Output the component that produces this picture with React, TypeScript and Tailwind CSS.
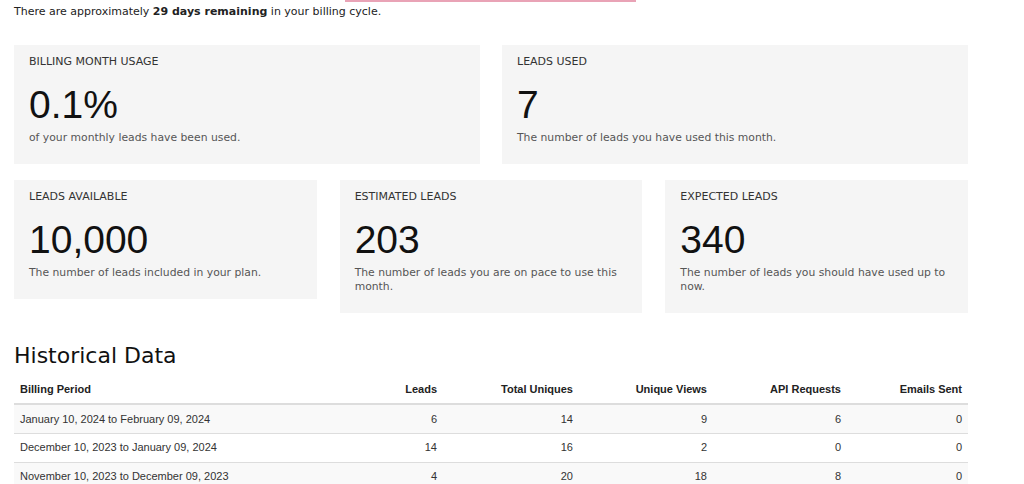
import React from 'react';

const cardsTop = [
  { title: 'BILLING MONTH USAGE', value: '0.1%', desc: 'of your monthly leads have been used.' },
  { title: 'LEADS USED', value: '7', desc: 'The number of leads you have used this month.' },
];

const cardsBottom = [
  { title: 'LEADS AVAILABLE', value: '10,000', desc: 'The number of leads included in your plan.' },
  { title: 'ESTIMATED LEADS', value: '203', desc: 'The number of leads you are on pace to use this month.' },
  { title: 'EXPECTED LEADS', value: '340', desc: 'The number of leads you should have used up to now.' },
];

const rows = [
  ['January 10, 2024 to February 09, 2024', '6', '14', '9', '6', '0'],
  ['December 10, 2023 to January 09, 2024', '14', '16', '2', '0', '0'],
  ['November 10, 2023 to December 09, 2023', '4', '20', '18', '8', '0'],
];

const Card: React.FC<{ title: string; value: string; desc: string }> = ({ title, value, desc }) => (
  <div className="bg-[#f5f5f5] px-[15px] pt-[10px] pb-[19px]">
    <div className="text-[11px] leading-[14px] text-[#333] font-['DejaVu_Sans',sans-serif]">{title}</div>
    <div className="mt-[14px] text-[39px] leading-[44px] text-[#111] font-['Liberation_Sans',Arial,sans-serif]">{value}</div>
    <div className="mt-[4px] text-[10.8px] leading-[14px] text-[#555] font-['DejaVu_Sans',sans-serif]">{desc}</div>
  </div>
);

const App: React.FC = () => {
  return (
    <div className="w-[1024px] h-[484px] overflow-hidden bg-white">
      <div className="ml-[345px] w-[291px] h-[2px] bg-[#e9a3b6]"></div>
      <div className="px-[14px] w-[982px]">
        <p className="mt-[2px] text-[11px] leading-[16px] text-[#222] font-['DejaVu_Sans',sans-serif]">
          There are approximately <b>29 days remaining</b> in your billing cycle.
        </p>

        {/* Usage cards */}
        <div className="mt-[25px] grid grid-cols-2 gap-[22px] items-start">
          {cardsTop.map((c) => (
            <Card key={c.title} {...c} />
          ))}
        </div>
        <div className="mt-[16px] grid grid-cols-3 gap-[23px] items-start">
          {cardsBottom.map((c) => (
            <Card key={c.title} {...c} />
          ))}
        </div>

        {/* Historical data */}
        <h2 className="mt-[29px] text-[22px] leading-[28px] text-[#111] font-['DejaVu_Sans',sans-serif]">Historical Data</h2>
        <table className="mt-[6px] w-[954px] table-fixed border-collapse text-[11px] text-[#333] font-['Liberation_Sans',Arial,sans-serif]">
          <thead>
            <tr className="border-b-2 border-[#ddd]">
              <th className="w-[300px] h-[28px] px-[6px] text-left font-bold text-[#222]">Billing Period</th>
              <th className="w-[131px] px-[8px] text-right font-bold text-[#222]">Leads</th>
              <th className="w-[136px] px-[8px] text-right font-bold text-[#222]">Total Uniques</th>
              <th className="w-[134px] px-[8px] text-right font-bold text-[#222]">Unique Views</th>
              <th className="w-[134px] px-[8px] text-right font-bold text-[#222]">API Requests</th>
              <th className="px-[6px] text-right font-bold text-[#222]">Emails Sent</th>
            </tr>
          </thead>
          <tbody>
            {rows.map((r, i) => (
              <tr key={r[0]} className={`border-b border-[#ddd] ${i % 2 === 0 ? 'bg-[#f9f9f9]' : 'bg-white'}`}>
                <td className="h-[29px] px-[6px] text-left">{r[0]}</td>
                <td className="px-[8px] text-right">{r[1]}</td>
                <td className="px-[8px] text-right">{r[2]}</td>
                <td className="px-[8px] text-right">{r[3]}</td>
                <td className="px-[8px] text-right">{r[4]}</td>
                <td className="px-[6px] text-right">{r[5]}</td>
              </tr>
            ))}
          </tbody>
        </table>
      </div>
    </div>
  );
};

export default App;
